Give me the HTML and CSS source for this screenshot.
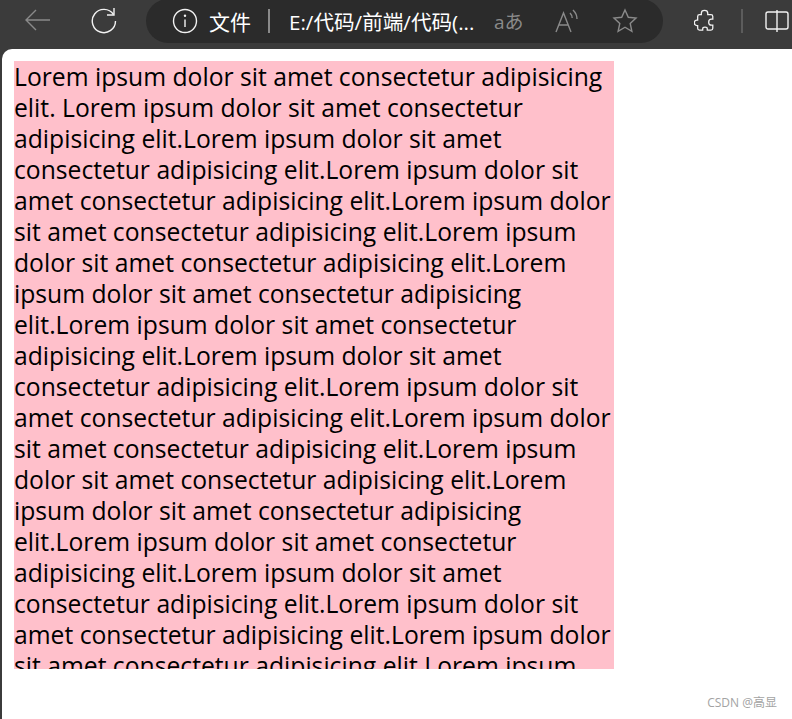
FILE: index.html
```html
<!DOCTYPE html>
<html lang="zh">
<head>
<meta charset="utf-8">
<title>文件</title>
<link rel="stylesheet" href="styles.css">
</head>
<body>
<header class="toolbar">
  <button class="tool tool-back" aria-label="back">
    <svg width="28" height="28" viewBox="0 0 28 28"><path d="M26 14H2M12 4 2 14l10 10" class="dim"/></svg>
  </button>
  <button class="tool tool-reload" aria-label="reload">
    <svg width="28" height="28" viewBox="0 0 28 28"><path d="M23.500 8.500A11.600 11.600 0 1 0 25.500 15" class="bright"/><path d="M24 2v7h-7" class="bright"/></svg>
  </button>
  <div class="address">
    <svg class="info" width="26" height="26" viewBox="0 0 26 26"><circle cx="13" cy="13" r="11.500" class="bright"/><path d="M13 11.500V19" class="bright"/><circle cx="13" cy="7.800" r="1.200" class="fill"/></svg>
    <span class="scheme">文件</span>
    <span class="sep"></span>
    <span class="url">E:/代码/前端/代码(...</span>
    <span class="translate">aあ</span>
    <svg class="read" width="24" height="24" viewBox="0 0 24 24"><path d="M1 23 8.500 4 16 23M3.800 16h9.500" class="dim"/><path d="M15 4c1.500 1.500 2.200 3 2.200 5M18 1c2 2 4 5 4 9" class="dim"/></svg>
    <svg class="star" width="26" height="26" viewBox="0 0 26 26"><path d="M13 2l3.300 7.300 7.700.8-5.800 5.300 1.700 7.900L13 19.200l-6.900 4.100 1.700-7.900L2 10.100l7.700-.8z" class="dim"/></svg>
  </div>
  <svg class="ext" width="22" height="24" viewBox="0 0 24 26"><path d="M8 4.500c0-4 7-4 7 0V6h3.500a2 2 0 0 1 2 2v3h-1.500c-4 0-4 6.500 0 6.500h1.500V21a2 2 0 0 1-2 2h-4v-1.500c0-2.500-5-2.500-5 0V23H6a2 2 0 0 1-2-2v-3H3c-3.500 0-3.500-6 0-6h1V8a2 2 0 0 1 2-2h2z" class="bright"/></svg>
  <span class="divider"></span>
  <svg class="split" width="24" height="24" viewBox="0 0 24 24"><rect x="1" y="3" width="22" height="17" rx="2" class="bright"/><path d="M12 1v22" class="bright"/></svg>
</header>
<main class="page">
  <div class="box"><div class="text">Lorem ipsum dolor sit amet consectetur adipisicing elit. Lorem ipsum dolor sit amet consectetur adipisicing elit.Lorem ipsum dolor sit amet consectetur adipisicing elit.Lorem ipsum dolor sit amet consectetur adipisicing elit.Lorem ipsum dolor sit amet consectetur adipisicing elit.Lorem ipsum dolor sit amet consectetur adipisicing elit.Lorem ipsum dolor sit amet consectetur adipisicing elit.Lorem ipsum dolor sit amet consectetur adipisicing elit.Lorem ipsum dolor sit amet consectetur adipisicing elit.Lorem ipsum dolor sit amet consectetur adipisicing elit.Lorem ipsum dolor sit amet consectetur adipisicing elit.Lorem ipsum dolor sit amet consectetur adipisicing elit.Lorem ipsum dolor sit amet consectetur adipisicing elit.Lorem ipsum dolor sit amet consectetur adipisicing elit.Lorem ipsum dolor sit amet consectetur adipisicing elit.Lorem ipsum dolor sit amet consectetur adipisicing elit.Lorem ipsum dolor sit amet consectetur adipisicing elit.Lorem ipsum dolor sit amet consectetur adipisicing elit.</div></div>
  <div class="mark">CSDN @高显</div>
</main>
</body>
</html>
```
FILE: styles.css
```css
* { box-sizing: border-box; }
html, body { margin: 0; height: 100%; overflow: hidden; }
body { background: #3b3b3b; width: 792px; height: 719px; display: flex; flex-direction: column; font-family: "Open Sans", "Noto Sans CJK SC", sans-serif; }
svg { display: block; flex: none; }
.dim, .bright { fill: none; stroke-width: 1.4; }
.dim { stroke: #8a8a8a; }
.bright { stroke: #f2f2f2; }
.fill { fill: #f2f2f2; }
.toolbar { height: 49px; flex: none; display: flex; align-items: flex-start; color: #fff; overflow: hidden; }
.tool { width: 28px; height: 28px; padding: 0; margin-top: 6px; border: 0; background: none; }
.tool-back { margin-left: 24px; }
.tool-reload { margin-left: 38px; }
.address { width: 517px; height: 44px; margin-top: -1px; margin-left: 28px; padding-left: 26px; background: #2b2b2b; border-radius: 22px; display: flex; align-items: center; }
.scheme { font-size: 21px; margin-left: 11px; }
.sep { width: 2px; height: 24px; background: #8a8a8a; margin: 0 19px 0 17px; }
.url { font-size: 20.6px; width: 205px; white-space: nowrap; }
.translate { font-size: 19px; color: #8a8a8a; width: 61px; }
.read { margin-right: 33px; }
.ext { margin: 9px 0 0 31px; }
.divider { width: 2px; height: 24px; background: #5c5c5c; margin: 9px 0 0 25px; }
.split { margin: 9px 0 0 22px; }
.page { flex: 1; background: #fff; margin-left: 2px; border-top-left-radius: 10px; padding: 12px 0 0 12px; position: relative; }
.box { width: 600px; height: 608px; overflow: hidden; background: pink; color: #000; font-size: 24.7px; line-height: 31px; }
.text { width: 610px; }
.mark { position: absolute; right: 15px; bottom: 8px; font-size: 12px; color: #a3a3a3; }
```
